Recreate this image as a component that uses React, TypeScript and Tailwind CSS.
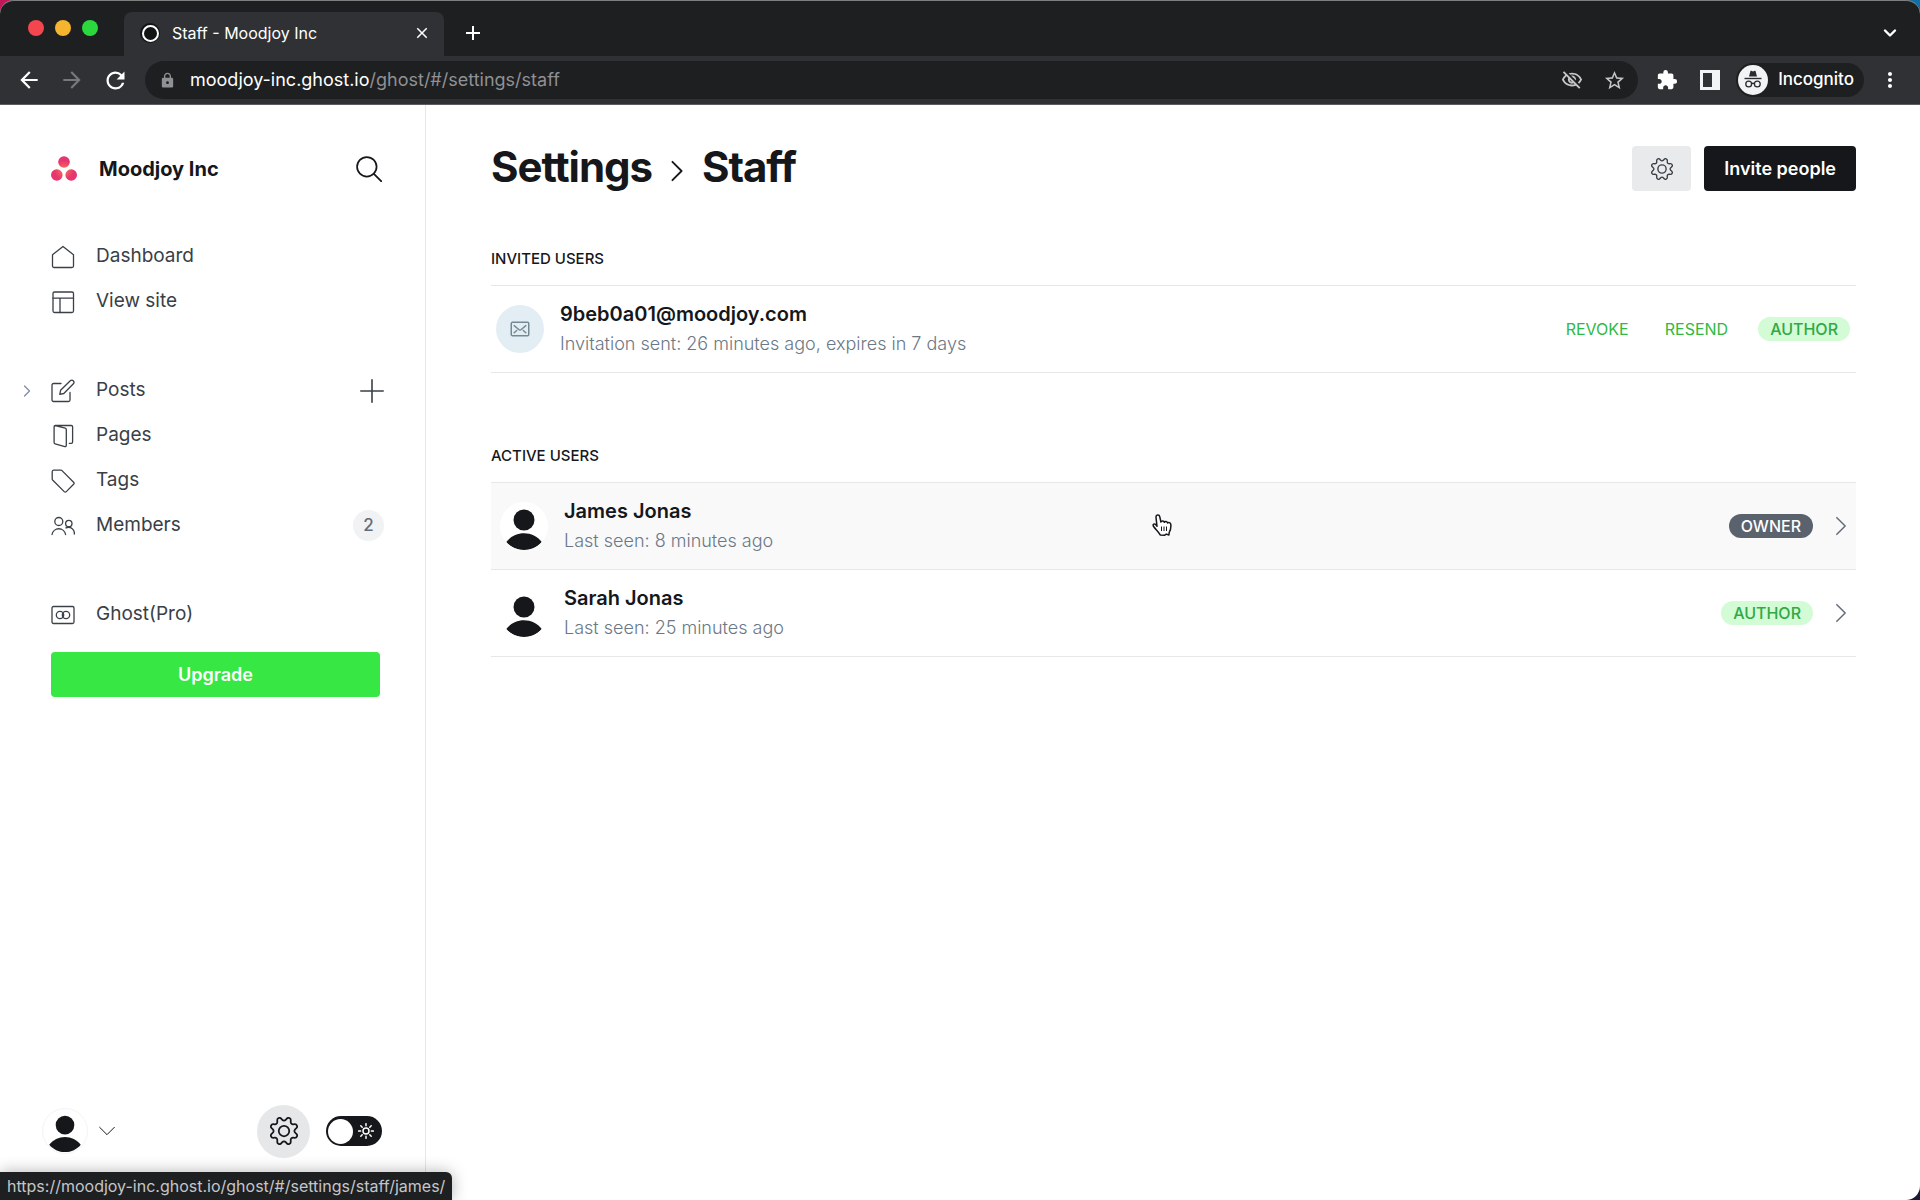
import React from 'react';
import { MdArrowBack, MdArrowForward, MdRefresh, MdLock, MdExtension, MdStarBorder, MdOutlineVisibilityOff, MdMoreVert, MdAdd, MdClose } from 'react-icons/md';

type IconProps = { className?: string; strokeWidth?: number; children?: React.ReactNode };

type NavItem = {
  label: string;
  Icon: () => React.ReactElement;
  expandable?: boolean;
  canAdd?: boolean;
  count?: number;
};

function Line({ className = 'size-6', strokeWidth = 1.3, children }: IconProps) {
  return (
    <svg
      viewBox="0 0 24 24"
      className={className}
      fill="none"
      stroke="currentColor"
      strokeWidth={strokeWidth}
      strokeLinecap="round"
      strokeLinejoin="round"
      aria-hidden="true"
    >
      {children}
    </svg>
  );
}

const HomeIcon = () => (
  <Line>
    <path d="M1.5 9.800 12 1.500l10.500 8.300V21a1.500 1.500 0 0 1-1.500 1.500H3A1.500 1.500 0 0 1 1.500 21Z" />
  </Line>
);

const SiteIcon = () => (
  <Line>
    <rect x="2" y="2" width="20.500" height="20.500" rx="1.500" />
    <path d="M2 8.200h20.500M9 8.200v14.300" />
  </Line>
);

const PostsIcon = () => (
  <Line>
    <path d="M19 13.500V21a1.500 1.500 0 0 1-1.500 1.500h-15A1.500 1.500 0 0 1 1 21V6a1.500 1.500 0 0 1 1.500-1.500H10" />
    <path d="m12.800 14.500-4 .8.800-4L19.300 1.700a2.200 2.200 0 0 1 3.100 3.100Z" />
  </Line>
);

const PagesIcon = () => (
  <Line>
    <path d="m4.200 1.600 10 2.600a1.500 1.500 0 0 1 1.100 1.400v15.800a1.200 1.200 0 0 1-1.500 1.200L4.100 19.900a1.300 1.300 0 0 1-1-1.300V2.700a1.200 1.200 0 0 1 1.200-1.200h16a1.300 1.300 0 0 1 1.300 1.300V18a1.300 1.300 0 0 1-1.300 1.300h-2" />
  </Line>
);

const TagIcon = () => (
  <Line>
    <path d="M1.200 2.700A1.500 1.500 0 0 1 2.700 1.200h7.200a1.500 1.500 0 0 1 1.100.4L22.600 13.200a1.500 1.500 0 0 1 0 2.100l-7.300 7.300a1.500 1.500 0 0 1-2.100 0L1.600 11a1.500 1.500 0 0 1-.4-1.100Z" />
  </Line>
);

const MembersIcon = () => (
  <Line>
    <circle cx="7.800" cy="7.500" r="4" />
    <circle cx="17.800" cy="9.500" r="3.200" />
    <path d="M1 20.500a6.900 6.900 0 0 1 13.600 0M15 13.900a5.800 5.800 0 0 1 8.300 6.100" />
  </Line>
);

const ProIcon = () => (
  <Line>
    <rect x="1" y="3.500" width="22" height="17" rx="1.500" />
    <circle cx="9" cy="12" r="3.700" />
    <circle cx="15" cy="12" r="3.700" />
  </Line>
);

const GearIcon = ({ className, strokeWidth = 1.5 }: IconProps) => (
  <Line className={className} strokeWidth={strokeWidth}>
    <circle cx="12" cy="12" r="4.500" />
    <path d="M10.546 2.438a1.957 1.957 0 0 0 2.908 0L14.400 1.400a1.959 1.959 0 0 1 3.410 1.413l-.071 1.400A1.958 1.958 0 0 0 19.790 6.262l1.400-.071A1.959 1.959 0 0 1 22.600 9.600l-1.040.940a1.958 1.958 0 0 0 0 2.909l1.040.940a1.959 1.959 0 0 1-1.413 3.410l-1.400-.071a1.958 1.958 0 0 0-2.056 2.056l.071 1.400A1.959 1.959 0 0 1 14.400 22.600l-.941-1.041a1.957 1.957 0 0 0-2.908 0L9.606 22.600A1.959 1.959 0 0 1 6.200 21.192l.072-1.400a1.958 1.958 0 0 0-2.056-2.056l-1.400.071A1.958 1.958 0 0 1 1.400 14.400l1.041-.940a1.958 1.958 0 0 0 0-2.909L1.400 9.606A1.958 1.958 0 0 1 2.809 6.200l1.400.071A1.958 1.958 0 0 0 6.264 4.212L6.200 2.812A1.959 1.959 0 0 1 9.606 1.400Z" />
  </Line>
);

const ChevronRight = ({ className, strokeWidth }: IconProps) => (
  <Line className={className} strokeWidth={strokeWidth}>
    <path d="m7 2 10 10L7 22" />
  </Line>
);

const PersonIcon = ({ className }: { className: string }) => (
  <svg viewBox="0 0 36 42" className={className} fill="#15171a" aria-hidden="true">
    <circle cx="18" cy="11" r="10.500" />
    <path d="M.3 33C4.500 27.500 11 24.300 18 24.300S31.500 27.500 35.700 33C31.500 38.200 25 41.300 18 41.300S4.500 38.200.3 33Z" />
  </svg>
);

const PointerIcon = ({ className }: { className: string }) => (
  <svg viewBox="0 0 20 22" className={className} aria-hidden="true">
    <path
      d="M5 12.300 4 3.400C3.700.4 7.300.2 7.800 2.800L8.900 8c.6-1.600 3.100-1.400 3.400.3.700-1.300 3-1 3.200.7.900-1 3-.4 3.300 1.300.4 3.400-.2 5.600-1.600 8.200l-.3 2.500-2.600-.9-1.500 1.100-4.600-.3C6.600 17.600 3.600 15.600 1.300 12c-.8-1.900 1.100-2.600 2.200-1.600Z"
      fill="#fff"
      stroke="#15171a"
      strokeWidth="1.500"
      strokeLinejoin="round"
    />
    <path d="M9.500 12.500v4.500M12 12.500v4.500M14.500 12.500v4.500" stroke="#15171a" strokeWidth="1" />
  </svg>
);

const NAV_GROUPS: NavItem[][] = [
  [
    { label: 'Dashboard', Icon: HomeIcon },
    { label: 'View site', Icon: SiteIcon },
  ],
  [
    { label: 'Posts', Icon: PostsIcon, expandable: true, canAdd: true },
    { label: 'Pages', Icon: PagesIcon },
    { label: 'Tags', Icon: TagIcon },
    { label: 'Members', Icon: MembersIcon, count: 2 },
  ],
  [{ label: 'Ghost(Pro)', Icon: ProIcon }],
];

const ACTIVE_USERS = [
  { name: 'James Jonas', seen: 'Last seen: 8 minutes ago', role: 'Owner', hovered: true },
  { name: 'Sarah Jonas', seen: 'Last seen: 25 minutes ago', role: 'Author', hovered: false },
];

function RoleBadge({ role }: { role: string }) {
  const colors = role === 'Owner' ? 'bg-[#5a636d] text-white' : 'bg-[#d3fbd5] text-[#30a946]';
  return (
    <span className={`flex h-6 items-center rounded-full px-3 text-base font-medium uppercase ${colors}`}>{role}</span>
  );
}

function BrowserChrome() {
  return (
    <header className="rounded-t-[14px] border-b border-[#5c5d60] bg-[#1e1f21] text-white">
      <div className="flex h-14 items-end rounded-t-[14px] border-t border-[#7d8080] pr-[18px] pl-7">
        <div className="flex h-14 items-center gap-[11px]">
          <span className="size-4 rounded-full bg-[#f4464f]" />
          <span className="size-4 rounded-full bg-[#f5b52e]" />
          <span className="size-4 rounded-full bg-[#2bd93f]" />
        </div>
        <div className="ml-[26px] flex h-11 w-[320px] items-center rounded-t-lg bg-[#303135] pr-3 pb-0.5 pl-4">
          <span className="flex size-5 items-center justify-center rounded-full bg-[#111315]">
            <span className="size-[17px] rounded-full border-2 border-white" />
          </span>
          <span className="ml-3 flex-1 text-base">Staff - Moodjoy Inc</span>
          <button type="button" aria-label="Close tab" className="flex size-5 items-center justify-center">
            <MdClose className="size-[18px]" />
          </button>
        </div>
        <button type="button" aria-label="New tab" className="ml-[17px] flex h-11 w-6 items-center justify-center pb-0.5">
          <MdAdd className="size-6" />
        </button>
        <button type="button" aria-label="Search tabs" className="ml-auto flex h-11 w-6 items-center justify-center pb-0.5">
          <Line className="size-6" strokeWidth={2.4}>
            <path d="m7 9.500 5 5 5-5" />
          </Line>
        </button>
      </div>

      <div className="flex h-12 items-center bg-[#303135] pr-[18px] pl-4">
        <div className="flex items-center gap-[17px]">
          <button type="button" aria-label="Back"><MdArrowBack className="size-[26px]" /></button>
          <button type="button" aria-label="Forward" className="text-[#77787b]"><MdArrowForward className="size-[26px]" /></button>
          <button type="button" aria-label="Reload"><MdRefresh className="size-[27px]" /></button>
        </div>
        <div className="ml-4 flex h-[38px] flex-1 items-center rounded-full bg-[#1e1f21] pr-3 pl-3.5">
          <MdLock className="size-[17px] text-[#8f9194]" />
          <span role="textbox" aria-label="Address" className="ml-3.5 flex-1 text-lg">
            moodjoy-inc.ghost.io<span className="text-[#8f9194]">/ghost/#/settings/staff</span>
          </span>
          <MdOutlineVisibilityOff className="size-[22px] text-[#c4c6c9]" />
          <button type="button" aria-label="Bookmark" className="ml-5 text-[#c4c6c9]">
            <MdStarBorder className="size-[23px]" />
          </button>
        </div>
        <button type="button" aria-label="Extensions" className="ml-[18px]"><MdExtension className="size-[22px]" /></button>
        <button type="button" aria-label="Side panel" className="ml-[22px]">
          <svg viewBox="0 0 20 20" className="size-5" aria-hidden="true">
            <path fill="#f1f3f4" fillRule="evenodd" d="M0 0h20v20H0ZM3 3v14h9V3Z" />
          </svg>
        </button>
        <button type="button" className="ml-4 flex h-[34px] items-center gap-2.5 rounded-full bg-[#1e1f21] pr-2.5 pl-0.5 text-[17px] font-medium">
          <svg viewBox="0 0 30 30" className="size-[30px]" fill="none" aria-hidden="true">
            <circle cx="15" cy="15" r="15" fill="#f1f3f4" />
            <path d="m11 11.500 1.400-5.300c.1-.5.600-.6 1-.4l1.600.6 1.600-.6c.4-.2.900-.1 1 .4L19 11.500Z" fill="#2a2b2e" />
            <path d="M6.500 13.500h17" stroke="#2a2b2e" strokeWidth="1.400" />
            <circle cx="10.700" cy="19" r="2.900" stroke="#2a2b2e" strokeWidth="1.300" />
            <circle cx="19.300" cy="19" r="2.900" stroke="#2a2b2e" strokeWidth="1.300" />
            <path d="M13.600 18.700c.9-.6 1.900-.6 2.800 0" stroke="#2a2b2e" strokeWidth="1.300" />
          </svg>
          Incognito
        </button>
        <button type="button" aria-label="Menu" className="ml-3.5"><MdMoreVert className="size-6" /></button>
      </div>
    </header>
  );
}

function Sidebar() {
  return (
    <aside className="flex w-[426px] shrink-0 flex-col border-r border-[#e6e7e9] pt-10 pb-10">
      <div className="flex h-12 items-center pr-[43px] pl-[51px]">
        <svg viewBox="0 0 26 26" className="size-[26px]" aria-hidden="true">
          <defs>
            <radialGradient id="brand" gradientUnits="userSpaceOnUse" cx="13" cy="14" r="14">
              <stop offset="0.200" stopColor="#f0645c" />
              <stop offset="0.700" stopColor="#e6356f" />
            </radialGradient>
          </defs>
          <g fill="url(#brand)">
            <circle cx="13" cy="6" r="5.800" />
            <circle cx="5.800" cy="19" r="5.800" />
            <circle cx="20.200" cy="19" r="5.800" />
          </g>
        </svg>
        <span className="ml-[22px] flex-1 text-xl font-bold">Moodjoy Inc</span>
        <button type="button" aria-label="Search">
          <Line className="size-[26px]" strokeWidth={1.6}>
            <circle cx="10" cy="10" r="9" />
            <path d="m16.500 16.500 7 7" />
          </Line>
        </button>
      </div>

      <nav className="mt-[41px] flex flex-col gap-11 text-[#394047]">
        {NAV_GROUPS.map((group, i) => (
          <ul key={i}>
            {group.map(({ label, Icon, expandable, canAdd, count }) => (
              <li key={label} className="flex h-[45px] items-center pr-[41px]">
                <span className="flex w-[51px] justify-center pl-0.5 text-[#7c8b9a]">
                  {expandable && (
                    <button type="button" aria-label="Expand posts">
                      <ChevronRight className="size-3" strokeWidth={2.4} />
                    </button>
                  )}
                </span>
                <a href="#" className="flex flex-1 items-center gap-[21px] text-[19px]">
                  <Icon />
                  {label}
                </a>
                {canAdd && (
                  <button type="button" aria-label="New post">
                    <Line strokeWidth={1.6}>
                      <path d="M12 .8v22.400M.8 12h22.400" />
                    </Line>
                  </button>
                )}
                {count && (
                  <span className="flex size-[31px] items-center justify-center rounded-full bg-[#f1f2f3] text-[17px] font-medium text-[#626d79]">
                    {count}
                  </span>
                )}
              </li>
            ))}
          </ul>
        ))}
      </nav>
      <button type="button" className="mt-[15px] mr-[45px] ml-[51px] h-[45px] rounded bg-[#37e743] text-lg font-semibold text-white">
        Upgrade
      </button>

      <div className="mt-auto flex h-[58px] items-center pr-[43px] pl-[42px]">
        <button type="button" aria-label="Account" className="flex items-center gap-[11px]">
          <span className="flex size-[46px] items-center justify-center overflow-hidden rounded-full border border-[#f3f4f5] pt-1.5">
            <PersonIcon className="h-[38px] w-8" />
          </span>
          <Line className="size-4" strokeWidth={1.5}>
            <path d="m1 6.500 11 11 11-11" />
          </Line>
        </button>
        <button type="button" aria-label="Settings" className="ml-auto flex size-[53px] items-center justify-center rounded-full bg-[#e6e7e9]">
          <GearIcon className="size-7" />
        </button>
        <label className="ml-4 flex h-[30px] w-14 cursor-pointer items-center justify-between rounded-full bg-[#15171a] pr-2 pl-0.5 text-white">
          <input type="checkbox" aria-label="Night shift" className="size-[25px] appearance-none rounded-full bg-white" />
          <Line className="size-4" strokeWidth={2.2}>
            <circle cx="12" cy="12" r="4.500" />
            <path d="M12 1v3M12 20v3M1 12h3M20 12h3M4.200 4.200l2.100 2.100M17.700 17.700l2.100 2.100M4.200 19.800l2.100-2.100M17.700 6.300l2.100-2.100" />
          </Line>
        </label>
      </div>
    </aside>
  );
}

function StaffPage() {
  return (
    <main className="flex-1 pt-[41px] pr-16 pl-[65px]">
      <div className="flex items-start justify-between">
        <h1 className="flex items-center text-[42px] leading-[41px] font-bold tracking-tight">
          <a href="#">Settings</a>
          <ChevronRight className="mx-3.5 mt-2 size-[22px]" strokeWidth={2} />
          Staff
        </h1>
        <div className="flex gap-[13px]">
          <button type="button" aria-label="Staff settings" className="flex h-[45px] w-[59px] items-center justify-center rounded bg-[#e9eaec] text-[#394047]">
            <GearIcon className="size-[22px]" />
          </button>
          <button type="button" className="h-[45px] rounded bg-[#15171a] px-5 text-lg font-semibold text-white">
            Invite people
          </button>
        </div>
      </div>

      <section className="pt-[58px]">
        <h2 className="text-[15px] leading-5 font-medium uppercase">Invited users</h2>
        <ul className="mt-4 border-t border-[#e6e7e9]">
          <li className="flex h-[87px] items-center border-b border-[#e6e7e9] pr-1.5 pl-[5px]">
            <span className="flex size-12 items-center justify-center rounded-full bg-[#e3eef4] text-[#738a94]">
              <Line className="size-5" strokeWidth={1.8}>
                <rect x="1.500" y="4" width="21" height="16" rx="1.500" />
                <path d="m5 8 5.500 4.600a2.400 2.400 0 0 0 3 0L19 8M5 16.500l3-2.700M19 16.500l-3-2.700" />
              </Line>
            </span>
            <div className="ml-4 flex-1">
              <h3 className="text-xl leading-[30px] font-semibold">9beb0a01@moodjoy.com</h3>
              <p className="text-lg leading-[30px] font-light text-[#6b7886]">Invitation sent: 26 minutes ago, expires in 7 days</p>
            </div>
            <div className="flex items-center text-base text-[#30b944] uppercase">
              <button type="button" className="mr-9 uppercase">Revoke</button>
              <button type="button" className="mr-[30px] uppercase">Resend</button>
              <RoleBadge role="Author" />
            </div>
          </li>
        </ul>
      </section>

      <section className="pt-[73px]">
        <h2 className="text-[15px] leading-5 font-medium uppercase">Active users</h2>
        <ul className="mt-4 border-t border-[#e6e7e9]">
          {ACTIVE_USERS.map((user) => (
            <li key={user.name} className="border-b border-[#e6e7e9]">
              <a href="#" className={`relative flex h-[86px] items-center pr-[5px] pl-[9px] ${user.hovered ? 'bg-[#f9f9fa]' : ''}`}>
                <span className="flex size-12 items-center justify-center overflow-hidden rounded-full bg-white pt-2">
                  <PersonIcon className="h-[42px] w-9" />
                </span>
                <div className="ml-4 flex-1">
                  <h3 className="text-xl leading-[30px] font-semibold">{user.name}</h3>
                  <p className="text-lg leading-[30px] font-light text-[#6b7886]">{user.seen}</p>
                </div>
                <RoleBadge role={user.role} />
                <ChevronRight className="ml-[18px] size-5 text-[#626d79]" strokeWidth={1.8} />
                {user.hovered && <PointerIcon className="absolute top-[31px] left-[661px] h-[22px] w-5" />}
              </a>
            </li>
          ))}
        </ul>
      </section>
    </main>
  );
}

export default function App() {
  return (
    <div className="bg-linear-to-br from-[#c2185b] from-10% via-[#0b6fa8] via-50% to-[#1b1a33] font-['Inter',sans-serif] text-[#15171a]">
      <div className="relative flex min-h-screen flex-col rounded-t-[14px] rounded-br-[14px] bg-white">
        <BrowserChrome />
        <div className="flex flex-1">
          <Sidebar />
          <StaffPage />
        </div>
        <div className="absolute bottom-0 left-0 flex h-7 items-center rounded-tr-md bg-[#1e1f21] px-[7px] text-base text-[#c4c6c9] shadow-[0_0_16px_rgba(0,0,0,0.3)]">
          https://moodjoy-inc.ghost.io/ghost/#/settings/staff/james/
        </div>
      </div>
    </div>
  );
}
